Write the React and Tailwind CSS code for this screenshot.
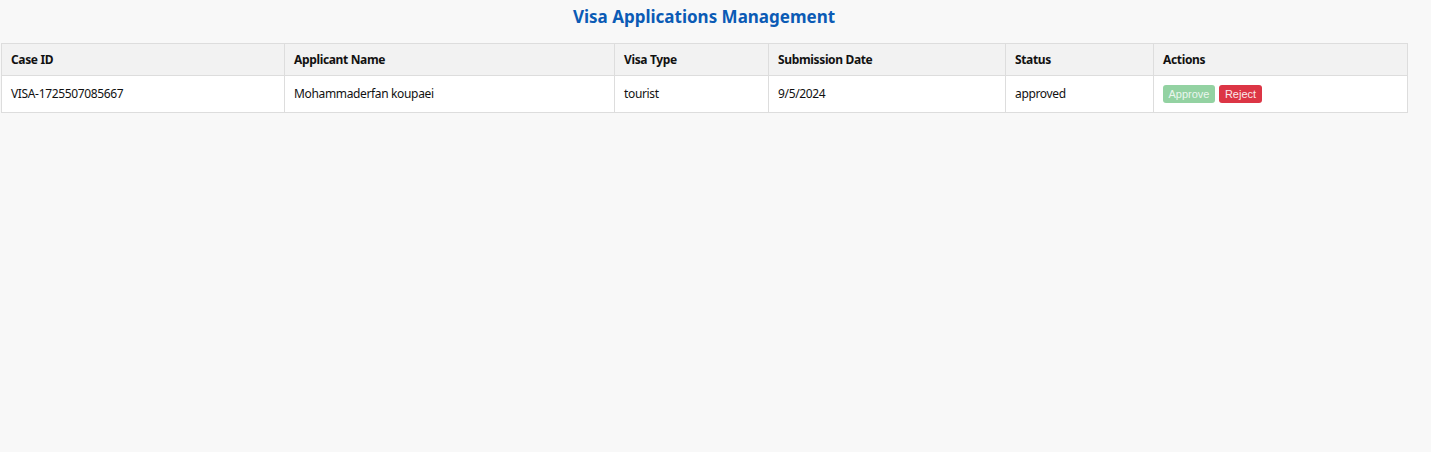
const rows = [
  {
    id: 'VISA-1725507085667',
    name: 'Mohammaderfan koupaei',
    type: 'tourist',
    date: '9/5/2024',
    status: 'approved',
  },
];

const th = 'border border-[#dddddd] bg-[#f2f2f2] px-[9px] h-[32px] text-left font-bold';
const td = 'border border-[#dddddd] bg-white px-[9px] h-[37px]';

export default function App() {
  return (
    <div className="min-h-[452px] w-full bg-[#f8f8f8] text-[#111] font-['Noto_Sans',sans-serif]">
      <div className="w-[1408px]">
        <h1 className="pt-[5px] pb-[14px] text-center text-[17px] leading-[24px] font-bold text-[#0b5bb5]">
          Visa Applications Management
        </h1>
        <table className="ml-[1px] w-[1407px] border-collapse text-[12px] tracking-[-0.35px] table-fixed">
          <colgroup>
            <col className="w-[283px]" />
            <col className="w-[330px]" />
            <col className="w-[154px]" />
            <col className="w-[237px]" />
            <col className="w-[148px]" />
            <col />
          </colgroup>
          <thead>
            <tr>
              <th className={th}>Case ID</th>
              <th className={th}>Applicant Name</th>
              <th className={th}>Visa Type</th>
              <th className={th}>Submission Date</th>
              <th className={th}>Status</th>
              <th className={th}>Actions</th>
            </tr>
          </thead>
          <tbody>
            {rows.map((r) => (
              <tr key={r.id}>
                <td className={td}>{r.id}</td>
                <td className={td}>{r.name}</td>
                <td className={td}>{r.type}</td>
                <td className={td}>{r.date}</td>
                <td className={td}>{r.status}</td>
                <td className={td}>
                  <div className="flex gap-[4px] font-['Liberation_Sans',sans-serif] text-[11px] tracking-normal">
                    <button
                      disabled={r.status === 'approved'}
                      className="h-[18px] w-[52px] rounded-[3px] bg-[#93d2a2] text-[#eaf6ee] leading-[18px]"
                    >
                      Approve
                    </button>
                    <button className="h-[18px] w-[43px] rounded-[3px] bg-[#dc3545] text-[#fbe9eb] leading-[18px]">
                      Reject
                    </button>
                  </div>
                </td>
              </tr>
            ))}
          </tbody>
        </table>
      </div>
    </div>
  );
}
